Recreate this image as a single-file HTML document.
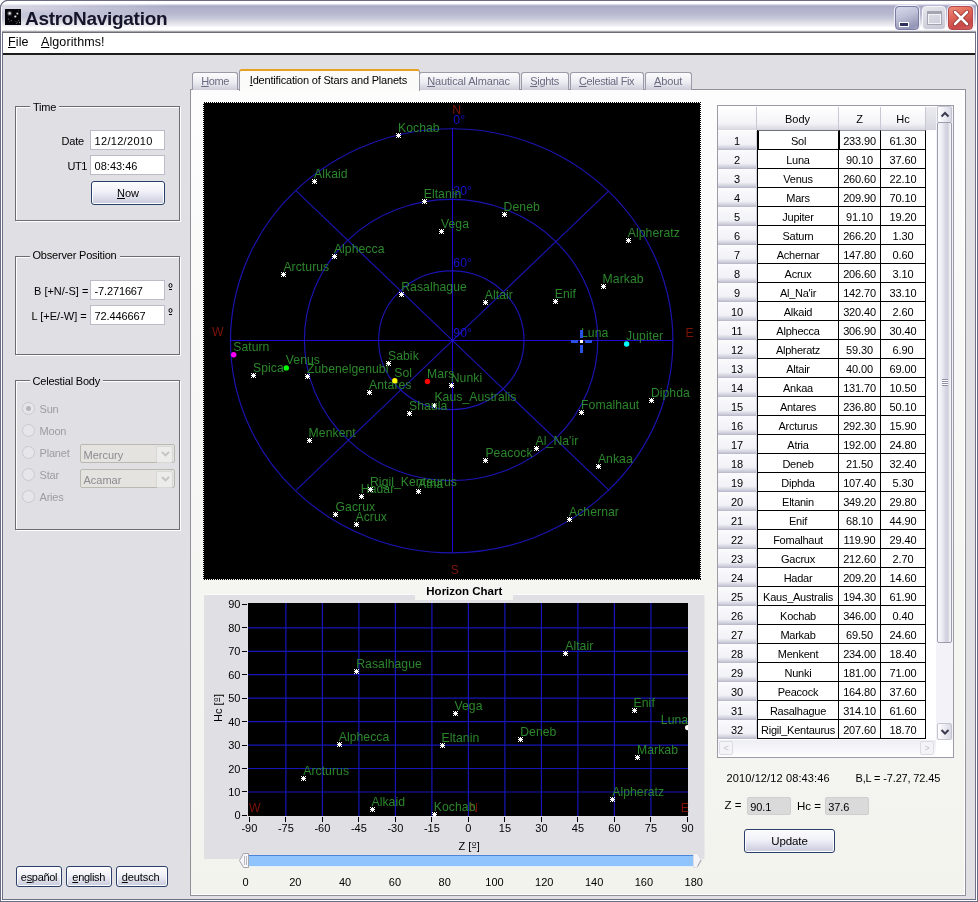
<!DOCTYPE html>
<html><head><meta charset="utf-8"><title>AstroNavigation</title>
<style>
html,body{margin:0;padding:0;}
body{will-change:transform;}
body{width:978px;height:902px;overflow:hidden;position:relative;background:#e0dfe3;font-family:"Liberation Sans",sans-serif;font-size:11px;letter-spacing:-0.2px;color:#000;}
div,span{box-sizing:border-box;}
.a{position:absolute;}
u{text-decoration:underline;}
/* window frame */
#frame{left:0;top:0;width:978px;height:902px;border:1px solid #6b6c84;}
#frame2{left:1px;top:1px;width:976px;height:900px;border:1px solid #fff;}
#frame3{left:2px;top:33px;width:974px;height:867px;border:1px solid #6f7088;border-top:none;}
#title{left:0;top:0;width:978px;height:33px;background:linear-gradient(to bottom,#5a5a74 0,#5a5a74 1.5px,#fff 2.2px,#fff 3.4px,#d8d8ec 4.6px,#a8a8c2 6px,#b0b0cc 8px,#b8b8d0 14px,#c6c8d8 18px,#dcdce4 22px,#f0f0f5 26px,#fff 27.5px,#fff 30px,#c8c8cc 31.2px,#6e6e78 32px,#6e6e78 33px);}
#tglow{left:2px;top:4px;width:170px;height:14px;background:linear-gradient(to right,rgba(255,255,255,.55),rgba(255,255,255,0));-webkit-mask-image:linear-gradient(to bottom,#000 0,#000 30%,transparent 100%);}
#ttext{left:25px;top:7.5px;font-weight:bold;font-size:19px;letter-spacing:-0.3px;color:#14142a;white-space:nowrap;}
#icon{left:5px;top:9px;width:16px;height:16px;background:#0a0a14;}
#menu{left:3px;top:33px;width:972px;height:20px;background:#fff;}
#menuline{left:3px;top:53px;width:972px;height:2px;background:#1c1c1c;}
.mi{top:34.5px;font-size:12.5px;letter-spacing:0.1px;white-space:nowrap;}
/* window buttons */
.wb{top:6px;width:24px;height:24px;border-radius:4px;}
/* group boxes */
.gb{border:1px solid #6c6c74;box-shadow:inset 1px 1px 0 #fff, 1px 1px 0 #fff;}
.gl{background:#e0dfe3;padding:0 3px;white-space:nowrap;}
.tx{white-space:nowrap;}
.in{background:#fff;border:1px solid #bcbcc8;padding:3.7px 0 0 3.6px;white-space:nowrap;font-size:11px;letter-spacing:0;}
.btn{border:1px solid #2b3f6b;border-radius:3px;background:linear-gradient(#fdfdff 0,#f0f0f8 45%,#c8cadc 100%);text-align:center;white-space:nowrap;box-shadow:inset 0 0 0 1px #fff;}
.dis{color:#9c9ca4;}
.radio{width:13px;height:13px;border-radius:50%;border:1px solid #c8c8d0;background:#e6e5ea;}
.combo{border:1px solid #b9b9b0;border-radius:2px;background:#e4e3e0;color:#8c8c90;padding:3.5px 0 0 2.5px;font-size:11px;letter-spacing:0;}
.combo i{position:absolute;right:1px;top:1px;width:15px;height:15px;background:#ececea;border:1px solid #d8d8d4;border-radius:2px;}
/* tabs */
.tab{top:72px;height:18px;border:1px solid #9a9aa8;border-bottom:none;border-radius:3px 3px 0 0;background:linear-gradient(#fcfcfd,#ececf2 55%,#cdcdda);color:#6a6a80;white-space:nowrap;font-size:11px;}
.tab span{position:absolute;top:2.1px;}
#seltab{left:239px;top:69px;width:181px;height:22px;background:#fbfbf9;border:1px solid #9a9aa8;border-bottom:none;border-top:2px solid #e8a020;border-radius:3px 3px 0 0;font-size:11px;color:#000;white-space:nowrap;}
#seltab span{position:absolute;left:9.8px;top:2.6px;letter-spacing:-0.19px;}
#pane{left:190px;top:89px;width:776px;height:807px;background:linear-gradient(#fdfdfe 0,#f9f9f8 25%,#f5f5f2 60%,#f3f3ee 100%);border:1px solid #91919c;box-shadow:inset -1px -1px 0 #fff;}
/* table */
#tbl{left:717px;top:105px;width:237px;height:653px;background:#fff;border:1px solid #9c9ca8;}
.hd{top:107px;height:23px;background:linear-gradient(#fff,#f4f4f8 70%,#d6d6e0);border-right:1px solid #c8c8d4;text-align:center;padding-top:5.5px;font-size:11px;letter-spacing:0;}
.rh{position:absolute;left:718px;width:39px;height:19px;background:linear-gradient(#fbfbfd 0,#f1f1f7 70%,#d2d2de 88%,#b6b6c8 100%);text-align:center;padding-top:3.5px;font-size:11px;letter-spacing:0;border-right:1px solid #d0d0da;}
.c{position:absolute;height:20px;border:1px solid #000;border-width:0 1px 1px 0;text-align:center;padding-top:3.5px;font-size:11px;letter-spacing:-0.15px;white-space:nowrap;background:#fff;margin-top:-1px;border-top:1px solid #000;}
.b{left:757px;width:82px;border-left:1px solid #000;letter-spacing:-0.25px;}
.z{left:839px;width:42px;}
.h{left:881px;width:45px;}
.ro{background:#dadada;border:1px solid #cfcfcf;border-radius:2px;padding:2.5px 0 0 2.2px;font-size:11px;letter-spacing:-0.1px;}
</style></head><body>
<div class="a" id="title"></div><div class="a" id="tglow"></div>
<svg class="a" style="left:5px;top:9px" width="16" height="16"><rect width="16" height="16" fill="#04040a"/><g fill="#fff"><circle cx="4.6" cy="4.4" r="2.4" opacity=".28"/><circle cx="4.6" cy="4.4" r="1.4" opacity=".55"/><circle cx="4.6" cy="4.4" r=".7"/><circle cx="12.4" cy="4.6" r="1.3" opacity=".4"/><circle cx="12.4" cy="4.6" r=".7" opacity=".85"/><circle cx="10.3" cy="7.6" r="1.4" opacity=".4"/><circle cx="10.3" cy="7.6" r=".75" opacity=".9"/><circle cx="3.5" cy="10.3" r=".7" opacity=".3"/><circle cx="6.3" cy="11.5" r=".7" opacity=".35"/><circle cx="4.5" cy="12.5" r=".6" opacity=".3"/><circle cx="13.5" cy="11.5" r=".7" opacity=".35"/><circle cx="14.5" cy="13.5" r=".7" opacity=".6"/><circle cx="11.5" cy="14.3" r=".6" opacity=".4"/><circle cx="11" cy="12.5" r=".6" opacity=".3"/><circle cx="12.5" cy="13.2" r=".5" opacity=".35"/><circle cx="13.5" cy="1.5" r=".6" opacity=".2"/></g></svg>
<div class="a" id="ttext">AstroNavigation</div>
<!-- window buttons -->
<div class="a wb" style="left:895px;border:1px solid #7a7ca4;box-shadow:0 0 0 1px #f0f0f8;background:linear-gradient(160deg,#d6d8ea 0%,#bfc1d8 40%,#9496b6 85%,#a6a8c4 100%);"><span class="a" style="left:3px;top:15px;width:10px;height:5px;background:#2e3060;border:1px solid #fff"></span></div>
<div class="a wb" style="left:922px;border:1px solid #f6f6fa;background:linear-gradient(160deg,#e6e6ee,#d0d0dc 70%,#c4c4d4);"><span class="a" style="left:4px;top:4px;width:15px;height:14px;border:1px solid #a4a4b0;border-top-width:3px;box-shadow:inset 1px 1px 0 #f4f4f8,inset -1px -1px 0 #f4f4f8"></span></div>
<div class="a wb" style="left:948px;width:25px;border:1px solid #b84848;box-shadow:0 0 0 1px #f0f0f8;background:linear-gradient(160deg,#f09080 0%,#e06858 35%,#c84848 75%,#d06060 100%);"><svg class="a" style="left:2px;top:1px" width="20" height="20"><path d="M4 4L16 16M16 4L4 16" stroke="#8a2a2a" stroke-width="4" stroke-linecap="round"/><path d="M4 4L16 16M16 4L4 16" stroke="#fff" stroke-width="2.6" stroke-linecap="round"/></svg></div>
<div class="a" id="menu"></div>
<div class="a" id="menuline"></div>
<div class="a mi" style="left:8px"><u>F</u>ile</div>
<div class="a mi" style="left:41px"><u>A</u>lgorithms!</div>

<!-- left panel: Time -->
<div class="a gb" style="left:15px;top:106px;width:165px;height:115px"></div>
<div class="a gl" style="left:30px;top:100.6px">Time</div>
<div class="a tx" style="left:61.5px;top:134.7px">Date</div>
<div class="a in" style="left:90px;top:130px;width:75px;height:20px;letter-spacing:0.3px">12/12/2010</div>
<div class="a tx" style="left:67.5px;top:159.5px;letter-spacing:-0.4px">UT1</div>
<div class="a in" style="left:90px;top:155px;width:75px;height:20px">08:43:46</div>
<div class="a btn" style="left:91px;top:181px;width:74px;height:24px;padding-top:5.2px;letter-spacing:0"><u>N</u>ow</div>

<!-- Observer Position -->
<div class="a gb" style="left:15px;top:256px;width:165px;height:99px"></div>
<div class="a gl" style="left:29.5px;top:248.8px">Observer Position</div>
<div class="a tx" style="left:34px;top:284.7px;letter-spacing:0">B [+N/-S] =</div>
<div class="a in" style="left:90px;top:280px;width:75px;height:20px;letter-spacing:-0.15px">-7.271667</div>
<svg class="a" style="left:168px;top:283px" width="6" height="8"><ellipse cx="2.5" cy="2.5" rx="1.5" ry="2" fill="none" stroke="#000" stroke-width="1"/><rect x="1" y="6" width="3" height="1" fill="#000"/></svg>
<div class="a tx" style="left:31.5px;top:309.5px;letter-spacing:0">L [+E/-W] =</div>
<div class="a in" style="left:90px;top:305px;width:75px;height:20px;letter-spacing:-0.12px">72.446667</div>
<svg class="a" style="left:168px;top:308px" width="6" height="8"><ellipse cx="2.5" cy="2.5" rx="1.5" ry="2" fill="none" stroke="#000" stroke-width="1"/><rect x="1" y="6" width="3" height="1" fill="#000"/></svg>

<!-- Celestial Body -->
<div class="a gb" style="left:15px;top:380px;width:165px;height:150px"></div>
<div class="a gl" style="left:29.5px;top:374.5px">Celestial Body</div>
<div class="a radio" style="left:22px;top:402px"><span class="a" style="left:3px;top:3px;width:5px;height:5px;border-radius:50%;background:#b4b4bc"></span></div>
<div class="a tx dis" style="left:39.5px;top:403.2px">Sun</div>
<div class="a radio" style="left:22px;top:424px"></div>
<div class="a tx dis" style="left:39.5px;top:425px">Moon</div>
<div class="a radio" style="left:22px;top:446px"></div>
<div class="a tx dis" style="left:39.5px;top:447px">Planet</div>
<div class="a combo" style="left:80px;top:444px;width:95px;height:19px">Mercury<i></i><svg class="a" style="right:4px;top:6px" width="9" height="6"><path d="M1 1L4.5 4.5L8 1" fill="none" stroke="#c4c4c0" stroke-width="1.8"/></svg></div>
<div class="a radio" style="left:22px;top:468px"></div>
<div class="a tx dis" style="left:39.5px;top:469.2px">Star</div>
<div class="a combo" style="left:80px;top:469px;width:95px;height:19px">Acamar<i></i><svg class="a" style="right:4px;top:6px" width="9" height="6"><path d="M1 1L4.5 4.5L8 1" fill="none" stroke="#c4c4c0" stroke-width="1.8"/></svg></div>
<div class="a radio" style="left:22px;top:490px"></div>
<div class="a tx dis" style="left:39.5px;top:491px">Aries</div>

<!-- language buttons -->
<div class="a btn" style="left:16px;top:866px;width:46px;height:21px;font-size:11px"><span class="a" style="left:3.8px;top:3.8px;letter-spacing:-0.3px">e<u>s</u>pañol</span></div>
<div class="a btn" style="left:66px;top:866px;width:46px;height:21px;font-size:11px"><span class="a" style="left:5.3px;top:3.8px;letter-spacing:-0.3px"><u>e</u>nglish</span></div>
<div class="a btn" style="left:116px;top:866px;width:52px;height:21px;font-size:11px"><span class="a" style="left:4.8px;top:3.8px;letter-spacing:-0.1px"><u>d</u>eutsch</span></div>

<!-- tabs -->
<div class="a" id="pane"></div>
<div class="a tab" style="left:192px;width:46px"><span style="left:8.2px;letter-spacing:-0.42px"><u>H</u>ome</span></div>
<div class="a tab" style="left:419px;width:101px"><span style="left:7.2px;letter-spacing:-0.14px"><u>N</u>autical Almanac</span></div>
<div class="a tab" style="left:521px;width:48px"><span style="left:8.2px;letter-spacing:-0.28px"><u>S</u>ights</span></div>
<div class="a tab" style="left:570px;width:74px"><span style="left:8px;letter-spacing:-0.36px"><u>C</u>elestial Fix</span></div>
<div class="a tab" style="left:645px;width:47px"><span style="left:8px;letter-spacing:-0.14px"><u>A</u>bout</span></div>
<div class="a" id="seltab"><span><u>I</u>dentification of Stars and Planets</span></div>

<svg width="978" height="902" style="position:absolute;left:0;top:0" font-family="Liberation Sans, sans-serif" font-size="12.2" letter-spacing="0.06">
<style>.ax{font-size:11px;letter-spacing:0}</style>
<rect x="204" y="103" width="496" height="476" fill="#000"/>
<rect x="203.5" y="102.5" width="497" height="477" fill="none" stroke="#000" stroke-width="1" stroke-dasharray="1 1" shape-rendering="crispEdges"/>
<g fill="none" stroke="#1c14b2" stroke-width="1.15">
<ellipse cx="451.7" cy="340.8" rx="221.2" ry="212.0"/>
<ellipse cx="451.1" cy="340.0" rx="146.7" ry="140.6"/>
<ellipse cx="451.3" cy="340.2" rx="72.7" ry="69.4"/>
<path d="M231.0 340.5H673.5M452.5 128.5V552.8" stroke="#2208d4" stroke-width="1"/>
<path d="M296.2 190.9L608.8 490.1M608.8 190.9L296.2 490.1"/>
</g>
<text x="453.3" y="124.4" fill="#1a10cc">0°</text>
<text x="453.3" y="195.0" fill="#1a10cc">30°</text>
<text x="453.3" y="266.5" fill="#1a10cc">60°</text>
<text x="453.3" y="336.5" fill="#1a10cc">90°</text>
<text x="452.3" y="114.3" fill="#7e1408">N</text>
<text x="450.7" y="573.6" fill="#7e1408">S</text>
<text x="211.9" y="336.3" fill="#7e1408">W</text>
<text x="685.6" y="336.8" fill="#7e1408">E</text>
<path d="M567 519.5h5M569.5 517v5" stroke="#fff" stroke-width="1" shape-rendering="crispEdges"/><rect x="568" y="518" width="3" height="3" fill="#fff" shape-rendering="crispEdges"/><path d="M567 517h1v1h-1zM571 517h1v1h-1zM567 521h1v1h-1zM571 521h1v1h-1z" fill="#fff" shape-rendering="crispEdges"/>
<text x="569.0" y="515.6" fill="#2c862c">Achernar</text>
<path d="M354 524.5h5M356.5 522v5" stroke="#fff" stroke-width="1" shape-rendering="crispEdges"/><rect x="355" y="523" width="3" height="3" fill="#fff" shape-rendering="crispEdges"/><path d="M354 522h1v1h-1zM358 522h1v1h-1zM354 526h1v1h-1zM358 526h1v1h-1z" fill="#fff" shape-rendering="crispEdges"/>
<text x="355.5" y="520.5" fill="#2c862c">Acrux</text>
<path d="M534 448.5h5M536.5 446v5" stroke="#fff" stroke-width="1" shape-rendering="crispEdges"/><rect x="535" y="447" width="3" height="3" fill="#fff" shape-rendering="crispEdges"/><path d="M534 446h1v1h-1zM538 446h1v1h-1zM534 450h1v1h-1zM538 450h1v1h-1z" fill="#fff" shape-rendering="crispEdges"/>
<text x="535.6" y="445.0" fill="#2c862c">Al_Na'ir</text>
<path d="M312 181.5h5M314.5 179v5" stroke="#fff" stroke-width="1" shape-rendering="crispEdges"/><rect x="313" y="180" width="3" height="3" fill="#fff" shape-rendering="crispEdges"/><path d="M312 179h1v1h-1zM316 179h1v1h-1zM312 183h1v1h-1zM316 183h1v1h-1z" fill="#fff" shape-rendering="crispEdges"/>
<text x="314.1" y="178.3" fill="#2c862c">Alkaid</text>
<path d="M332 256.5h5M334.5 254v5" stroke="#fff" stroke-width="1" shape-rendering="crispEdges"/><rect x="333" y="255" width="3" height="3" fill="#fff" shape-rendering="crispEdges"/><path d="M332 254h1v1h-1zM336 254h1v1h-1zM332 258h1v1h-1zM336 258h1v1h-1z" fill="#fff" shape-rendering="crispEdges"/>
<text x="333.9" y="252.8" fill="#2c862c">Alphecca</text>
<path d="M626 240.5h5M628.5 238v5" stroke="#fff" stroke-width="1" shape-rendering="crispEdges"/><rect x="627" y="239" width="3" height="3" fill="#fff" shape-rendering="crispEdges"/><path d="M626 238h1v1h-1zM630 238h1v1h-1zM626 242h1v1h-1zM630 242h1v1h-1z" fill="#fff" shape-rendering="crispEdges"/>
<text x="627.8" y="237.1" fill="#2c862c">Alpheratz</text>
<path d="M483 302.5h5M485.5 300v5" stroke="#fff" stroke-width="1" shape-rendering="crispEdges"/><rect x="484" y="301" width="3" height="3" fill="#fff" shape-rendering="crispEdges"/><path d="M483 300h1v1h-1zM487 300h1v1h-1zM483 304h1v1h-1zM487 304h1v1h-1z" fill="#fff" shape-rendering="crispEdges"/>
<text x="484.8" y="299.3" fill="#2c862c">Altair</text>
<path d="M596 466.5h5M598.5 464v5" stroke="#fff" stroke-width="1" shape-rendering="crispEdges"/><rect x="597" y="465" width="3" height="3" fill="#fff" shape-rendering="crispEdges"/><path d="M596 464h1v1h-1zM600 464h1v1h-1zM596 468h1v1h-1zM600 468h1v1h-1z" fill="#fff" shape-rendering="crispEdges"/>
<text x="597.9" y="463.0" fill="#2c862c">Ankaa</text>
<path d="M367 392.5h5M369.5 390v5" stroke="#fff" stroke-width="1" shape-rendering="crispEdges"/><rect x="368" y="391" width="3" height="3" fill="#fff" shape-rendering="crispEdges"/><path d="M367 390h1v1h-1zM371 390h1v1h-1zM367 394h1v1h-1zM371 394h1v1h-1z" fill="#fff" shape-rendering="crispEdges"/>
<text x="369.1" y="388.7" fill="#2c862c">Antares</text>
<path d="M281 274.5h5M283.5 272v5" stroke="#fff" stroke-width="1" shape-rendering="crispEdges"/><rect x="282" y="273" width="3" height="3" fill="#fff" shape-rendering="crispEdges"/><path d="M281 272h1v1h-1zM285 272h1v1h-1zM281 276h1v1h-1zM285 276h1v1h-1z" fill="#fff" shape-rendering="crispEdges"/>
<text x="283.4" y="270.9" fill="#2c862c">Arcturus</text>
<path d="M416 491.5h5M418.5 489v5" stroke="#fff" stroke-width="1" shape-rendering="crispEdges"/><rect x="417" y="490" width="3" height="3" fill="#fff" shape-rendering="crispEdges"/><path d="M416 489h1v1h-1zM420 489h1v1h-1zM416 493h1v1h-1zM420 493h1v1h-1z" fill="#fff" shape-rendering="crispEdges"/>
<text x="418.1" y="487.6" fill="#2c862c">Atria</text>
<path d="M502 214.5h5M504.5 212v5" stroke="#fff" stroke-width="1" shape-rendering="crispEdges"/><rect x="503" y="213" width="3" height="3" fill="#fff" shape-rendering="crispEdges"/><path d="M502 212h1v1h-1zM506 212h1v1h-1zM502 216h1v1h-1zM506 216h1v1h-1z" fill="#fff" shape-rendering="crispEdges"/>
<text x="503.6" y="210.8" fill="#2c862c">Deneb</text>
<path d="M649 400.5h5M651.5 398v5" stroke="#fff" stroke-width="1" shape-rendering="crispEdges"/><rect x="650" y="399" width="3" height="3" fill="#fff" shape-rendering="crispEdges"/><path d="M649 398h1v1h-1zM653 398h1v1h-1zM649 402h1v1h-1zM653 402h1v1h-1z" fill="#fff" shape-rendering="crispEdges"/>
<text x="650.9" y="396.9" fill="#2c862c">Diphda</text>
<path d="M422 201.5h5M424.5 199v5" stroke="#fff" stroke-width="1" shape-rendering="crispEdges"/><rect x="423" y="200" width="3" height="3" fill="#fff" shape-rendering="crispEdges"/><path d="M422 199h1v1h-1zM426 199h1v1h-1zM422 203h1v1h-1zM426 203h1v1h-1z" fill="#fff" shape-rendering="crispEdges"/>
<text x="423.7" y="197.7" fill="#2c862c">Eltanin</text>
<path d="M553 301.5h5M555.5 299v5" stroke="#fff" stroke-width="1" shape-rendering="crispEdges"/><rect x="554" y="300" width="3" height="3" fill="#fff" shape-rendering="crispEdges"/><path d="M553 299h1v1h-1zM557 299h1v1h-1zM553 303h1v1h-1zM557 303h1v1h-1z" fill="#fff" shape-rendering="crispEdges"/>
<text x="554.7" y="297.5" fill="#2c862c">Enif</text>
<path d="M579 412.5h5M581.5 410v5" stroke="#fff" stroke-width="1" shape-rendering="crispEdges"/><rect x="580" y="411" width="3" height="3" fill="#fff" shape-rendering="crispEdges"/><path d="M579 410h1v1h-1zM583 410h1v1h-1zM579 414h1v1h-1zM583 414h1v1h-1z" fill="#fff" shape-rendering="crispEdges"/>
<text x="581.1" y="408.5" fill="#2c862c">Fomalhaut</text>
<path d="M333 514.5h5M335.5 512v5" stroke="#fff" stroke-width="1" shape-rendering="crispEdges"/><rect x="334" y="513" width="3" height="3" fill="#fff" shape-rendering="crispEdges"/><path d="M333 512h1v1h-1zM337 512h1v1h-1zM333 516h1v1h-1zM337 516h1v1h-1z" fill="#fff" shape-rendering="crispEdges"/>
<text x="335.5" y="510.7" fill="#2c862c">Gacrux</text>
<path d="M359 496.5h5M361.5 494v5" stroke="#fff" stroke-width="1" shape-rendering="crispEdges"/><rect x="360" y="495" width="3" height="3" fill="#fff" shape-rendering="crispEdges"/><path d="M359 494h1v1h-1zM363 494h1v1h-1zM359 498h1v1h-1zM363 498h1v1h-1z" fill="#fff" shape-rendering="crispEdges"/>
<text x="360.8" y="492.5" fill="#2c862c">Hadar</text>
<path d="M432 405.5h5M434.5 403v5" stroke="#fff" stroke-width="1" shape-rendering="crispEdges"/><rect x="433" y="404" width="3" height="3" fill="#fff" shape-rendering="crispEdges"/><path d="M432 403h1v1h-1zM436 403h1v1h-1zM432 407h1v1h-1zM436 407h1v1h-1z" fill="#fff" shape-rendering="crispEdges"/>
<text x="434.4" y="401.4" fill="#2c862c">Kaus_Australis</text>
<path d="M396 135.5h5M398.5 133v5" stroke="#fff" stroke-width="1" shape-rendering="crispEdges"/><rect x="397" y="134" width="3" height="3" fill="#fff" shape-rendering="crispEdges"/><path d="M396 133h1v1h-1zM400 133h1v1h-1zM396 137h1v1h-1zM400 137h1v1h-1z" fill="#fff" shape-rendering="crispEdges"/>
<text x="398.0" y="132.1" fill="#2c862c">Kochab</text>
<path d="M601 286.5h5M603.5 284v5" stroke="#fff" stroke-width="1" shape-rendering="crispEdges"/><rect x="602" y="285" width="3" height="3" fill="#fff" shape-rendering="crispEdges"/><path d="M601 284h1v1h-1zM605 284h1v1h-1zM601 288h1v1h-1zM605 288h1v1h-1z" fill="#fff" shape-rendering="crispEdges"/>
<text x="602.6" y="283.2" fill="#2c862c">Markab</text>
<path d="M307 440.5h5M309.5 438v5" stroke="#fff" stroke-width="1" shape-rendering="crispEdges"/><rect x="308" y="439" width="3" height="3" fill="#fff" shape-rendering="crispEdges"/><path d="M307 438h1v1h-1zM311 438h1v1h-1zM307 442h1v1h-1zM311 442h1v1h-1z" fill="#fff" shape-rendering="crispEdges"/>
<text x="308.6" y="436.5" fill="#2c862c">Menkent</text>
<path d="M449 385.5h5M451.5 383v5" stroke="#fff" stroke-width="1" shape-rendering="crispEdges"/><rect x="450" y="384" width="3" height="3" fill="#fff" shape-rendering="crispEdges"/><path d="M449 383h1v1h-1zM453 383h1v1h-1zM449 387h1v1h-1zM453 387h1v1h-1z" fill="#fff" shape-rendering="crispEdges"/>
<text x="450.7" y="382.0" fill="#2c862c">Nunki</text>
<path d="M483 460.5h5M485.5 458v5" stroke="#fff" stroke-width="1" shape-rendering="crispEdges"/><rect x="484" y="459" width="3" height="3" fill="#fff" shape-rendering="crispEdges"/><path d="M483 458h1v1h-1zM487 458h1v1h-1zM483 462h1v1h-1zM487 462h1v1h-1z" fill="#fff" shape-rendering="crispEdges"/>
<text x="485.4" y="456.5" fill="#2c862c">Peacock</text>
<path d="M399 294.5h5M401.5 292v5" stroke="#fff" stroke-width="1" shape-rendering="crispEdges"/><rect x="400" y="293" width="3" height="3" fill="#fff" shape-rendering="crispEdges"/><path d="M399 292h1v1h-1zM403 292h1v1h-1zM399 296h1v1h-1zM403 296h1v1h-1z" fill="#fff" shape-rendering="crispEdges"/>
<text x="401.2" y="290.6" fill="#2c862c">Rasalhague</text>
<path d="M368 489.5h5M370.5 487v5" stroke="#fff" stroke-width="1" shape-rendering="crispEdges"/><rect x="369" y="488" width="3" height="3" fill="#fff" shape-rendering="crispEdges"/><path d="M368 487h1v1h-1zM372 487h1v1h-1zM368 491h1v1h-1zM372 491h1v1h-1z" fill="#fff" shape-rendering="crispEdges"/>
<text x="370.0" y="486.2" fill="#2c862c">Rigil_Kentaurus</text>
<path d="M386 363.5h5M388.5 361v5" stroke="#fff" stroke-width="1" shape-rendering="crispEdges"/><rect x="387" y="362" width="3" height="3" fill="#fff" shape-rendering="crispEdges"/><path d="M386 361h1v1h-1zM390 361h1v1h-1zM386 365h1v1h-1zM390 365h1v1h-1z" fill="#fff" shape-rendering="crispEdges"/>
<text x="388.0" y="359.9" fill="#2c862c">Sabik</text>
<path d="M407 413.5h5M409.5 411v5" stroke="#fff" stroke-width="1" shape-rendering="crispEdges"/><rect x="408" y="412" width="3" height="3" fill="#fff" shape-rendering="crispEdges"/><path d="M407 411h1v1h-1zM411 411h1v1h-1zM407 415h1v1h-1zM411 415h1v1h-1z" fill="#fff" shape-rendering="crispEdges"/>
<text x="409.0" y="409.9" fill="#2c862c">Shaula</text>
<path d="M251 375.5h5M253.5 373v5" stroke="#fff" stroke-width="1" shape-rendering="crispEdges"/><rect x="252" y="374" width="3" height="3" fill="#fff" shape-rendering="crispEdges"/><path d="M251 373h1v1h-1zM255 373h1v1h-1zM251 377h1v1h-1zM255 377h1v1h-1z" fill="#fff" shape-rendering="crispEdges"/>
<text x="253.0" y="371.9" fill="#2c862c">Spica</text>
<path d="M439 231.5h5M441.5 229v5" stroke="#fff" stroke-width="1" shape-rendering="crispEdges"/><rect x="440" y="230" width="3" height="3" fill="#fff" shape-rendering="crispEdges"/><path d="M439 229h1v1h-1zM443 229h1v1h-1zM439 233h1v1h-1zM443 233h1v1h-1z" fill="#fff" shape-rendering="crispEdges"/>
<text x="441.0" y="227.9" fill="#2c862c">Vega</text>
<path d="M305 376.5h5M307.5 374v5" stroke="#fff" stroke-width="1" shape-rendering="crispEdges"/><rect x="306" y="375" width="3" height="3" fill="#fff" shape-rendering="crispEdges"/><path d="M305 374h1v1h-1zM309 374h1v1h-1zM305 378h1v1h-1zM309 378h1v1h-1z" fill="#fff" shape-rendering="crispEdges"/>
<text x="307.0" y="372.9" fill="#2c862c">Zubenelgenubi</text>
<text x="394.3" y="377.1" fill="#2c862c">Sol</text>
<text x="581.0" y="337.1" fill="#2c862c">Luna</text>
<text x="285.8" y="364.3" fill="#2c862c">Venus</text>
<text x="427.0" y="377.9" fill="#2c862c">Mars</text>
<text x="626.1" y="340.4" fill="#2c862c">Jupiter</text>
<text x="233.2" y="351.1" fill="#2c862c">Saturn</text>
<circle cx="394.8" cy="380.7" r="2.7" fill="#ffff00"/>
<path d="M571 340h7v3h-7zM585 340h7v3h-7zM580 330h3v8h-3zM580 345h3v8h-3z" fill="#2a50e6" shape-rendering="crispEdges"/><rect x="580" y="340" width="3" height="3" fill="#fff" shape-rendering="crispEdges"/>
<circle cx="286.3" cy="367.9" r="2.7" fill="#00ff00"/>
<circle cx="427.5" cy="381.5" r="2.7" fill="#ff0000"/>
<circle cx="626.6" cy="344.0" r="2.7" fill="#00ffff"/>
<circle cx="233.7" cy="354.7" r="2.7" fill="#ff00ff"/>
<rect x="204" y="595" width="500.5" height="264" fill="#e0dfe3"/>
<path d="M204 594.5H704.5" stroke="#fafafa" stroke-width="1"/>
<rect x="248" y="603" width="440" height="213" fill="#000"/>
<g stroke="#1616b8" stroke-width="1.2">
<path d="M285.9 603V816"/>
<path d="M322.4 603V816"/>
<path d="M358.9 603V816"/>
<path d="M395.4 603V816"/>
<path d="M431.9 603V816"/>
<path d="M468.4 603V816"/>
<path d="M504.9 603V816"/>
<path d="M541.4 603V816"/>
<path d="M577.9 603V816"/>
<path d="M614.4 603V816"/>
<path d="M650.9 603V816"/>
<path d="M248 792.0H688"/>
<path d="M248 768.5H688"/>
<path d="M248 745.1H688"/>
<path d="M248 721.6H688"/>
<path d="M248 698.2H688"/>
<path d="M248 674.7H688"/>
<path d="M248 651.3H688"/>
<path d="M248 627.8H688"/>
</g>
<g fill="#000" shape-rendering="crispEdges">
<rect x="249" y="817" width="1" height="5"/>
<rect x="285" y="817" width="1" height="5"/>
<rect x="322" y="817" width="1" height="5"/>
<rect x="358" y="817" width="1" height="5"/>
<rect x="395" y="817" width="1" height="5"/>
<rect x="431" y="817" width="1" height="5"/>
<rect x="468" y="817" width="1" height="5"/>
<rect x="504" y="817" width="1" height="5"/>
<rect x="541" y="817" width="1" height="5"/>
<rect x="577" y="817" width="1" height="5"/>
<rect x="614" y="817" width="1" height="5"/>
<rect x="650" y="817" width="1" height="5"/>
<rect x="687" y="817" width="1" height="5"/>
<rect x="242" y="815" width="5" height="1"/>
<rect x="242" y="791" width="5" height="1"/>
<rect x="242" y="768" width="5" height="1"/>
<rect x="242" y="745" width="5" height="1"/>
<rect x="242" y="721" width="5" height="1"/>
<rect x="242" y="698" width="5" height="1"/>
<rect x="242" y="674" width="5" height="1"/>
<rect x="242" y="651" width="5" height="1"/>
<rect x="242" y="627" width="5" height="1"/>
<rect x="242" y="604" width="5" height="1"/>
</g>
<text x="249.4" y="832.4" fill="#000" text-anchor="middle" class="ax">-90</text>
<text x="285.9" y="832.4" fill="#000" text-anchor="middle" class="ax">-75</text>
<text x="322.4" y="832.4" fill="#000" text-anchor="middle" class="ax">-60</text>
<text x="358.9" y="832.4" fill="#000" text-anchor="middle" class="ax">-45</text>
<text x="395.4" y="832.4" fill="#000" text-anchor="middle" class="ax">-30</text>
<text x="431.9" y="832.4" fill="#000" text-anchor="middle" class="ax">-15</text>
<text x="468.4" y="832.4" fill="#000" text-anchor="middle" class="ax">0</text>
<text x="504.9" y="832.4" fill="#000" text-anchor="middle" class="ax">15</text>
<text x="541.4" y="832.4" fill="#000" text-anchor="middle" class="ax">30</text>
<text x="577.9" y="832.4" fill="#000" text-anchor="middle" class="ax">45</text>
<text x="614.4" y="832.4" fill="#000" text-anchor="middle" class="ax">60</text>
<text x="650.9" y="832.4" fill="#000" text-anchor="middle" class="ax">75</text>
<text x="687.4" y="832.4" fill="#000" text-anchor="middle" class="ax">90</text>
<text x="240.5" y="819.4" fill="#000" text-anchor="end" class="ax">0</text>
<text x="240.5" y="796.0" fill="#000" text-anchor="end" class="ax">10</text>
<text x="240.5" y="772.5" fill="#000" text-anchor="end" class="ax">20</text>
<text x="240.5" y="749.1" fill="#000" text-anchor="end" class="ax">30</text>
<text x="240.5" y="725.6" fill="#000" text-anchor="end" class="ax">40</text>
<text x="240.5" y="702.2" fill="#000" text-anchor="end" class="ax">50</text>
<text x="240.5" y="678.7" fill="#000" text-anchor="end" class="ax">60</text>
<text x="240.5" y="655.3" fill="#000" text-anchor="end" class="ax">70</text>
<text x="240.5" y="631.8" fill="#000" text-anchor="end" class="ax">80</text>
<text x="240.5" y="608.4" fill="#000" text-anchor="end" class="ax">90</text>
<text x="458.5" y="849.8" fill="#000" class="ax">Z [<tspan font-size="7.5" dy="-3.6" dx="0.6" text-decoration="underline">o</tspan><tspan dy="3.6" dx="0.6">]</tspan></text>
<text transform="translate(221.7,722) rotate(-90)" fill="#000" class="ax">Hc [<tspan font-size="7.5" dy="-3.6" dx="0.6" text-decoration="underline">o</tspan><tspan dy="3.6" dx="0.6">]</tspan></text>
<text x="249.0" y="812.2" fill="#7e1408">W</text>
<text x="680.7" y="812.2" fill="#7e1408">E</text>
<text x="469.3" y="812.2" fill="#7e1408">N</text>
<text x="245.5" y="885.6" fill="#000" text-anchor="middle" class="ax">0</text>
<text x="295.3" y="885.6" fill="#000" text-anchor="middle" class="ax">20</text>
<text x="345.1" y="885.6" fill="#000" text-anchor="middle" class="ax">40</text>
<text x="394.9" y="885.6" fill="#000" text-anchor="middle" class="ax">60</text>
<text x="444.7" y="885.6" fill="#000" text-anchor="middle" class="ax">80</text>
<text x="494.5" y="885.6" fill="#000" text-anchor="middle" class="ax">100</text>
<text x="544.3" y="885.6" fill="#000" text-anchor="middle" class="ax">120</text>
<text x="594.1" y="885.6" fill="#000" text-anchor="middle" class="ax">140</text>
<text x="643.9" y="885.6" fill="#000" text-anchor="middle" class="ax">160</text>
<text x="693.7" y="885.6" fill="#000" text-anchor="middle" class="ax">180</text>
<clipPath id="hc"><rect x="248" y="603" width="440" height="213"/></clipPath><g clip-path="url(#hc)">
<text x="660.8" y="724" fill="#2c862c">Luna</text>
<circle cx="687.6" cy="727.6" r="2.6" fill="#fff"/>
<text x="371.5" y="805.9" fill="#2c862c">Alkaid</text>
<text x="338.7" y="740.7" fill="#2c862c">Alphecca</text>
<text x="612.2" y="795.8" fill="#2c862c">Alpheratz</text>
<text x="565.2" y="650.2" fill="#2c862c">Altair</text>
<text x="303.2" y="774.7" fill="#2c862c">Arcturus</text>
<text x="520.2" y="736.0" fill="#2c862c">Deneb</text>
<text x="441.6" y="742.1" fill="#2c862c">Eltanin</text>
<text x="633.6" y="706.7" fill="#2c862c">Enif</text>
<text x="433.8" y="811.1" fill="#2c862c">Kochab</text>
<text x="637.0" y="754.3" fill="#2c862c">Markab</text>
<text x="356.2" y="667.6" fill="#2c862c">Rasalhague</text>
<text x="454.5" y="710.3" fill="#2c862c">Vega</text>
</g>
<path d="M370 809.5h5M372.5 807v5" stroke="#fff" stroke-width="1" shape-rendering="crispEdges"/><rect x="371" y="808" width="3" height="3" fill="#fff" shape-rendering="crispEdges"/><path d="M370 807h1v1h-1zM374 807h1v1h-1zM370 811h1v1h-1zM374 811h1v1h-1z" fill="#fff" shape-rendering="crispEdges"/>
<path d="M337 744.5h5M339.5 742v5" stroke="#fff" stroke-width="1" shape-rendering="crispEdges"/><rect x="338" y="743" width="3" height="3" fill="#fff" shape-rendering="crispEdges"/><path d="M337 742h1v1h-1zM341 742h1v1h-1zM337 746h1v1h-1zM341 746h1v1h-1z" fill="#fff" shape-rendering="crispEdges"/>
<path d="M610 799.5h5M612.5 797v5" stroke="#fff" stroke-width="1" shape-rendering="crispEdges"/><rect x="611" y="798" width="3" height="3" fill="#fff" shape-rendering="crispEdges"/><path d="M610 797h1v1h-1zM614 797h1v1h-1zM610 801h1v1h-1zM614 801h1v1h-1z" fill="#fff" shape-rendering="crispEdges"/>
<path d="M563 653.5h5M565.5 651v5" stroke="#fff" stroke-width="1" shape-rendering="crispEdges"/><rect x="564" y="652" width="3" height="3" fill="#fff" shape-rendering="crispEdges"/><path d="M563 651h1v1h-1zM567 651h1v1h-1zM563 655h1v1h-1zM567 655h1v1h-1z" fill="#fff" shape-rendering="crispEdges"/>
<path d="M301 778.5h5M303.5 776v5" stroke="#fff" stroke-width="1" shape-rendering="crispEdges"/><rect x="302" y="777" width="3" height="3" fill="#fff" shape-rendering="crispEdges"/><path d="M301 776h1v1h-1zM305 776h1v1h-1zM301 780h1v1h-1zM305 780h1v1h-1z" fill="#fff" shape-rendering="crispEdges"/>
<path d="M518 739.5h5M520.5 737v5" stroke="#fff" stroke-width="1" shape-rendering="crispEdges"/><rect x="519" y="738" width="3" height="3" fill="#fff" shape-rendering="crispEdges"/><path d="M518 737h1v1h-1zM522 737h1v1h-1zM518 741h1v1h-1zM522 741h1v1h-1z" fill="#fff" shape-rendering="crispEdges"/>
<path d="M440 745.5h5M442.5 743v5" stroke="#fff" stroke-width="1" shape-rendering="crispEdges"/><rect x="441" y="744" width="3" height="3" fill="#fff" shape-rendering="crispEdges"/><path d="M440 743h1v1h-1zM444 743h1v1h-1zM440 747h1v1h-1zM444 747h1v1h-1z" fill="#fff" shape-rendering="crispEdges"/>
<path d="M632 710.5h5M634.5 708v5" stroke="#fff" stroke-width="1" shape-rendering="crispEdges"/><rect x="633" y="709" width="3" height="3" fill="#fff" shape-rendering="crispEdges"/><path d="M632 708h1v1h-1zM636 708h1v1h-1zM632 712h1v1h-1zM636 712h1v1h-1z" fill="#fff" shape-rendering="crispEdges"/>
<path d="M432 814.5h5M434.5 812v5" stroke="#fff" stroke-width="1" shape-rendering="crispEdges"/><rect x="433" y="813" width="3" height="3" fill="#fff" shape-rendering="crispEdges"/><path d="M432 812h1v1h-1zM436 812h1v1h-1zM432 816h1v1h-1zM436 816h1v1h-1z" fill="#fff" shape-rendering="crispEdges"/>
<path d="M635 757.5h5M637.5 755v5" stroke="#fff" stroke-width="1" shape-rendering="crispEdges"/><rect x="636" y="756" width="3" height="3" fill="#fff" shape-rendering="crispEdges"/><path d="M635 755h1v1h-1zM639 755h1v1h-1zM635 759h1v1h-1zM639 759h1v1h-1z" fill="#fff" shape-rendering="crispEdges"/>
<path d="M354 671.5h5M356.5 669v5" stroke="#fff" stroke-width="1" shape-rendering="crispEdges"/><rect x="355" y="670" width="3" height="3" fill="#fff" shape-rendering="crispEdges"/><path d="M354 669h1v1h-1zM358 669h1v1h-1zM354 673h1v1h-1zM358 673h1v1h-1z" fill="#fff" shape-rendering="crispEdges"/>
<path d="M453 713.5h5M455.5 711v5" stroke="#fff" stroke-width="1" shape-rendering="crispEdges"/><rect x="454" y="712" width="3" height="3" fill="#fff" shape-rendering="crispEdges"/><path d="M453 711h1v1h-1zM457 711h1v1h-1zM453 715h1v1h-1zM457 715h1v1h-1z" fill="#fff" shape-rendering="crispEdges"/>
</svg>
<div class="a" style="left:415px;top:584px;width:98px;height:16px;background:#f5f5f2;font-weight:bold;font-size:11.5px;letter-spacing:0"><span class="a" style="left:11.3px;top:0.8px">Horizon Chart</span></div>

<!-- slider -->
<div class="a" style="left:248px;top:855px;width:445px;height:12px;background:#90c4fc;border-top:1px solid #4a86dc;border-bottom:1px solid #e4f0fc"></div>
<svg class="a" style="left:236px;top:851px" width="14" height="19"><path d="M3.5 9.5L7.5 2.5H12.5V16.5H7.5Z" fill="#f6f6f8" stroke="#a4a4ac" stroke-width="1"/><path d="M8.5 5V14M10.5 5V14" stroke="#b8b8c0" stroke-width="1"/></svg>
<svg class="a" style="left:692px;top:851px" width="14" height="19"><path d="M1.5 2.5H5.5L9.5 9.5L5.5 16.5H1.5Z" fill="#f4f4f6" stroke="#dcdce0" stroke-width="1"/><path d="M9 9L5.5 15.5" stroke="#9c9ca4" stroke-width="1"/></svg>

<!-- table -->
<div class="a" id="tbl"></div>
<div class="a hd" style="left:718px;width:39px"></div>
<div class="a hd" style="left:757px;width:82px">Body</div>
<div class="a hd" style="left:839px;width:42px">Z</div>
<div class="a hd" style="left:881px;width:45px">Hc</div>
<div class="a hd" style="left:926px;width:10px;border:none;background:linear-gradient(#ececf0,#d6d6e0)"></div>
<div class="rh" style="top:131px">1</div><div class="c b" style="top:131px;border-top-color:#70707c;border-right-width:2px;border-left-width:2px;width:83px;z-index:2">Sol</div><div class="c z" style="top:131px;border-top-color:#9a9aa8">233.90</div><div class="c h" style="top:131px;border-top-color:#9a9aa8">61.30</div>
<div class="rh" style="top:150px">2</div><div class="c b" style="top:150px">Luna</div><div class="c z" style="top:150px">90.10</div><div class="c h" style="top:150px">37.60</div>
<div class="rh" style="top:169px">3</div><div class="c b" style="top:169px">Venus</div><div class="c z" style="top:169px">260.60</div><div class="c h" style="top:169px">22.10</div>
<div class="rh" style="top:188px">4</div><div class="c b" style="top:188px">Mars</div><div class="c z" style="top:188px">209.90</div><div class="c h" style="top:188px">70.10</div>
<div class="rh" style="top:207px">5</div><div class="c b" style="top:207px">Jupiter</div><div class="c z" style="top:207px">91.10</div><div class="c h" style="top:207px">19.20</div>
<div class="rh" style="top:226px">6</div><div class="c b" style="top:226px">Saturn</div><div class="c z" style="top:226px">266.20</div><div class="c h" style="top:226px">1.30</div>
<div class="rh" style="top:245px">7</div><div class="c b" style="top:245px">Achernar</div><div class="c z" style="top:245px">147.80</div><div class="c h" style="top:245px">0.60</div>
<div class="rh" style="top:264px">8</div><div class="c b" style="top:264px">Acrux</div><div class="c z" style="top:264px">206.60</div><div class="c h" style="top:264px">3.10</div>
<div class="rh" style="top:283px">9</div><div class="c b" style="top:283px">Al_Na'ir</div><div class="c z" style="top:283px">142.70</div><div class="c h" style="top:283px">33.10</div>
<div class="rh" style="top:302px">10</div><div class="c b" style="top:302px">Alkaid</div><div class="c z" style="top:302px">320.40</div><div class="c h" style="top:302px">2.60</div>
<div class="rh" style="top:321px">11</div><div class="c b" style="top:321px">Alphecca</div><div class="c z" style="top:321px">306.90</div><div class="c h" style="top:321px">30.40</div>
<div class="rh" style="top:340px">12</div><div class="c b" style="top:340px">Alpheratz</div><div class="c z" style="top:340px">59.30</div><div class="c h" style="top:340px">6.90</div>
<div class="rh" style="top:359px">13</div><div class="c b" style="top:359px">Altair</div><div class="c z" style="top:359px">40.00</div><div class="c h" style="top:359px">69.00</div>
<div class="rh" style="top:378px">14</div><div class="c b" style="top:378px">Ankaa</div><div class="c z" style="top:378px">131.70</div><div class="c h" style="top:378px">10.50</div>
<div class="rh" style="top:397px">15</div><div class="c b" style="top:397px">Antares</div><div class="c z" style="top:397px">236.80</div><div class="c h" style="top:397px">50.10</div>
<div class="rh" style="top:416px">16</div><div class="c b" style="top:416px">Arcturus</div><div class="c z" style="top:416px">292.30</div><div class="c h" style="top:416px">15.90</div>
<div class="rh" style="top:435px">17</div><div class="c b" style="top:435px">Atria</div><div class="c z" style="top:435px">192.00</div><div class="c h" style="top:435px">24.80</div>
<div class="rh" style="top:454px">18</div><div class="c b" style="top:454px">Deneb</div><div class="c z" style="top:454px">21.50</div><div class="c h" style="top:454px">32.40</div>
<div class="rh" style="top:473px">19</div><div class="c b" style="top:473px">Diphda</div><div class="c z" style="top:473px">107.40</div><div class="c h" style="top:473px">5.30</div>
<div class="rh" style="top:492px">20</div><div class="c b" style="top:492px">Eltanin</div><div class="c z" style="top:492px">349.20</div><div class="c h" style="top:492px">29.80</div>
<div class="rh" style="top:511px">21</div><div class="c b" style="top:511px">Enif</div><div class="c z" style="top:511px">68.10</div><div class="c h" style="top:511px">44.90</div>
<div class="rh" style="top:530px">22</div><div class="c b" style="top:530px">Fomalhaut</div><div class="c z" style="top:530px">119.90</div><div class="c h" style="top:530px">29.40</div>
<div class="rh" style="top:549px">23</div><div class="c b" style="top:549px">Gacrux</div><div class="c z" style="top:549px">212.60</div><div class="c h" style="top:549px">2.70</div>
<div class="rh" style="top:568px">24</div><div class="c b" style="top:568px">Hadar</div><div class="c z" style="top:568px">209.20</div><div class="c h" style="top:568px">14.60</div>
<div class="rh" style="top:587px">25</div><div class="c b" style="top:587px">Kaus_Australis</div><div class="c z" style="top:587px">194.30</div><div class="c h" style="top:587px">61.90</div>
<div class="rh" style="top:606px">26</div><div class="c b" style="top:606px">Kochab</div><div class="c z" style="top:606px">346.00</div><div class="c h" style="top:606px">0.40</div>
<div class="rh" style="top:625px">27</div><div class="c b" style="top:625px">Markab</div><div class="c z" style="top:625px">69.50</div><div class="c h" style="top:625px">24.60</div>
<div class="rh" style="top:644px">28</div><div class="c b" style="top:644px">Menkent</div><div class="c z" style="top:644px">234.00</div><div class="c h" style="top:644px">18.40</div>
<div class="rh" style="top:663px">29</div><div class="c b" style="top:663px">Nunki</div><div class="c z" style="top:663px">181.00</div><div class="c h" style="top:663px">71.00</div>
<div class="rh" style="top:682px">30</div><div class="c b" style="top:682px">Peacock</div><div class="c z" style="top:682px">164.80</div><div class="c h" style="top:682px">37.60</div>
<div class="rh" style="top:701px">31</div><div class="c b" style="top:701px">Rasalhague</div><div class="c z" style="top:701px">314.10</div><div class="c h" style="top:701px">61.60</div>
<div class="rh" style="top:720px">32</div><div class="c b" style="top:720px">Rigil_Kentaurus</div><div class="c z" style="top:720px">207.60</div><div class="c h" style="top:720px">18.70</div>
<!-- v scrollbar -->
<div class="a" style="left:936px;top:106px;width:17px;height:634px;background:#f2f2f8"></div>
<div class="a" style="left:937px;top:106px;width:15px;height:17px;border:1px solid #c4c4d0;border-radius:2px;background:linear-gradient(90deg,#fff,#d8d8e4)"><svg class="a" style="left:2px;top:4px" width="10" height="8"><path d="M1.5 5.5L5 2L8.5 5.5" fill="none" stroke="#3c3c50" stroke-width="2"/></svg></div>
<div class="a" style="left:937px;top:122px;width:15px;height:521px;border:1px solid #9c9cac;border-radius:2px;background:linear-gradient(90deg,#fbfbfd 0,#ececf3 30%,#d4d4e2 62%,#d0d0de 75%,#f4f4f8 95%)"></div>
<div class="a" style="left:942px;top:379px;width:6px;height:7px;background:repeating-linear-gradient(#8e8ea8 0,#8e8ea8 1px,#fff 1px,#fff 2px)"></div>
<div class="a" style="left:937px;top:723px;width:15px;height:17px;border:1px solid #c4c4d0;border-radius:2px;background:linear-gradient(90deg,#fff,#d8d8e4)"><svg class="a" style="left:2px;top:4px" width="10" height="8"><path d="M1.5 2L5 5.5L8.5 2" fill="none" stroke="#3c3c50" stroke-width="2"/></svg></div>
<!-- h scrollbar -->
<div class="a" style="left:718px;top:740px;width:218px;height:16px;background:linear-gradient(#eeeef4,#fdfdfe)"></div>
<div class="a" style="left:719px;top:741px;width:14px;height:14px;border:1px solid #dcdce4;border-radius:2px;background:#f4f4f8;color:#c0c0c8;font-size:9px;text-align:center;line-height:12px">&lt;</div>
<div class="a" style="left:920px;top:741px;width:14px;height:14px;border:1px solid #dcdce4;border-radius:2px;background:#f4f4f8;color:#c0c0c8;font-size:9px;text-align:center;line-height:12px">&gt;</div>

<!-- status -->
<div class="a tx" style="left:726.5px;top:771.8px;font-size:11px;letter-spacing:0.12px">2010/12/12 08:43:46</div>
<div class="a tx" style="left:855.5px;top:771.8px;font-size:11px;letter-spacing:-0.15px">B,L = -7.27, 72.45</div>
<div class="a tx" style="left:724.5px;top:798.5px;font-size:11.5px;letter-spacing:0">Z =</div>
<div class="a ro" style="left:747px;top:797px;width:44px;height:18px">90.1</div>
<div class="a tx" style="left:797px;top:799.5px;font-size:11.5px;letter-spacing:0">Hc =</div>
<div class="a ro" style="left:825px;top:797px;width:44px;height:18px">37.6</div>
<div class="a btn" style="left:744px;top:829px;width:91px;height:24px;padding-top:5px;font-size:11.5px;letter-spacing:-0.1px">Update</div>

<div class="a" id="frame"></div><div class="a" id="frame2"></div><div class="a" id="frame3"></div>
<svg class="a" style="left:0;top:0" width="8" height="8"><path d="M0 0H7Q1.2 1.2 0 7Z" fill="#fff"/><path d="M7 0.5Q1.5 1.5 0.5 7" fill="none" stroke="#6b6c84" stroke-width="1.2"/></svg>
<svg class="a" style="left:970px;top:0" width="8" height="8"><path d="M8 0H1Q6.8 1.2 8 7Z" fill="#fff"/><path d="M1 0.5Q6.5 1.5 7.5 7" fill="none" stroke="#6b6c84" stroke-width="1.2"/></svg>
</body></html>
